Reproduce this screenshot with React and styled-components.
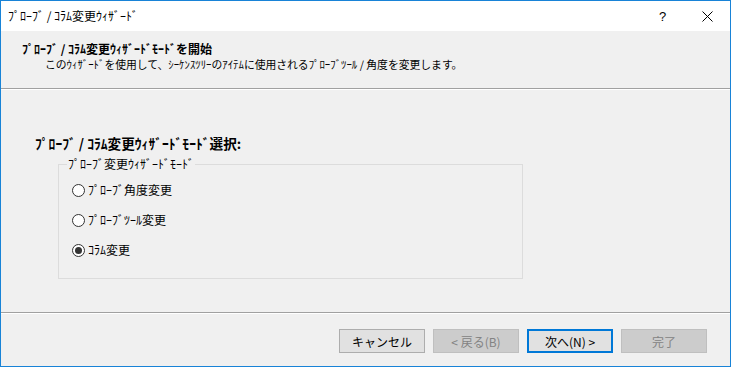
import React from "react";
import styled, { createGlobalStyle } from "styled-components";

const Global = createGlobalStyle`
  html, body { margin: 0; padding: 0; background: #ffffff; }
  * { box-sizing: border-box; }
  body {
    font-family: "Noto Sans CJK JP", "Noto Sans", sans-serif;
    font-size: 12px;
    color: #000;
  }
`;

const Window = styled.div`
  width: 731px;
  height: 367px;
  border: 1px solid #1883d7;
  display: flex;
  flex-direction: column;
  background: #f0f0f0;
`;

const TitleBar = styled.div`
  height: 30px;
  background: #ffffff;
  display: flex;
  align-items: center;
  padding-left: 7px;
`;

const TitleText = styled.div`
  flex: 1;
  font-size: 12px;
  line-height: 16px;
  margin-top: -1px;
`;

const CaptionButton = styled.div`
  width: 45px;
  height: 30px;
  display: flex;
  align-items: center;
  justify-content: center;
  font-family: "Liberation Sans", sans-serif;
  font-size: 13px;
`;

const Header = styled.div`
  height: 58px;
  padding: 10px 0 0 21px;
  border-bottom: 1px solid #a0a0a0;
  box-shadow: 0 1px 0 #ffffff;
  background: #f0f0f0;
`;

const HeaderTitle = styled.div`
  font-weight: bold;
  line-height: 16px;
  font-size: 12px;
`;

const HeaderSub = styled.div`
  padding-left: 23px;
  line-height: 16px;
  margin-top: -1px;
  font-size: 10.8px;
`;

const Body = styled.div`
  flex: 1;
  padding: 46px 0 0 34px;
  border-bottom: 1px solid #a0a0a0;
  box-shadow: 0 1px 0 #ffffff;
`;

const SectionTitle = styled.div`
  font-weight: bold;
  line-height: 16px;
  font-size: 13.6px;
`;

const Group = styled.fieldset`
  margin: 5px 0 0 23px;
  width: 465px;
  border: 1px solid #dcdcdc;
  padding: 10px 0 20px 13px;
  min-width: 0;
`;

const Legend = styled.legend`
  padding: 0 1px;
  margin-left: -5px;
  line-height: 16px;
  font-size: 12px;
`;

const RadioList = styled.div`
  display: flex;
  flex-direction: column;
  gap: 14px;
`;

const RadioRow = styled.label`
  display: flex;
  align-items: center;
  height: 16px;
  gap: 3px;
  line-height: 16px;
`;

const RadioCircle = styled.span`
  width: 13px;
  height: 13px;
  border-radius: 50%;
  border: 1px solid #333333;
  background: #ffffff;
  display: flex;
  align-items: center;
  justify-content: center;
  &::after {
    content: "";
    width: 7px;
    height: 7px;
    border-radius: 50%;
    background: ${(p) => (p.$checked ? "#333333" : "transparent")};
  }
`;

const Footer = styled.div`
  height: 53px;
  display: flex;
  justify-content: flex-end;
  align-items: flex-start;
  padding: 16px 23px 0 0;
  gap: 8px;
`;

const Button = styled.div`
  width: 86px;
  height: 24px;
  display: flex;
  align-items: center;
  justify-content: center;
  font-size: 12px;
  background: ${(p) => (p.$disabled ? "#cccccc" : "#e1e1e1")};
  color: ${(p) => (p.$disabled ? "#838383" : "#000000")};
  border: ${(p) =>
    p.$default ? "2px solid #0078d7" : p.$disabled ? "1px solid #bfbfbf" : "1px solid #adadad"};
`;

const radios = [
  { label: "ﾌﾟﾛｰﾌﾞ角度変更", checked: false },
  { label: "ﾌﾟﾛｰﾌﾞﾂｰﾙ変更", checked: false },
  { label: "ｺﾗﾑ変更", checked: true },
];

export default function App() {
  return (
    <>
      <Global />
      <Window>
        <TitleBar>
          <TitleText>ﾌﾟﾛｰﾌﾞ / ｺﾗﾑ変更ｳｨｻﾞｰﾄﾞ</TitleText>
          <CaptionButton>?</CaptionButton>
          <CaptionButton>
            <svg width="11" height="11" viewBox="0 0 11 11">
              <path d="M0.5 0.5 L10.5 10.5 M10.5 0.5 L0.5 10.5" stroke="#000" strokeWidth="1" />
            </svg>
          </CaptionButton>
        </TitleBar>
        <Header>
          <HeaderTitle>ﾌﾟﾛｰﾌﾞ / ｺﾗﾑ変更ｳｨｻﾞｰﾄﾞﾓｰﾄﾞを開始</HeaderTitle>
          <HeaderSub>
            このｳｨｻﾞｰﾄﾞを使用して、ｼｰｹﾝｽﾂﾘｰのｱｲﾃﾑに使用されるﾌﾟﾛｰﾌﾞﾂｰﾙ / 角度を変更します。
          </HeaderSub>
        </Header>
        <Body>
          <SectionTitle>ﾌﾟﾛｰﾌﾞ / ｺﾗﾑ変更ｳｨｻﾞｰﾄﾞﾓｰﾄﾞ選択:</SectionTitle>
          <Group>
            <Legend>ﾌﾟﾛｰﾌﾞ変更ｳｨｻﾞｰﾄﾞﾓｰﾄﾞ</Legend>
            <RadioList>
              {radios.map((r) => (
                <RadioRow key={r.label}>
                  <RadioCircle $checked={r.checked} />
                  {r.label}
                </RadioRow>
              ))}
            </RadioList>
          </Group>
        </Body>
        <Footer>
          <Button>キャンセル</Button>
          <Button $disabled>&lt; 戻る(B)</Button>
          <Button $default>次へ(N) &gt;</Button>
          <Button $disabled>完了</Button>
        </Footer>
      </Window>
    </>
  );
}
